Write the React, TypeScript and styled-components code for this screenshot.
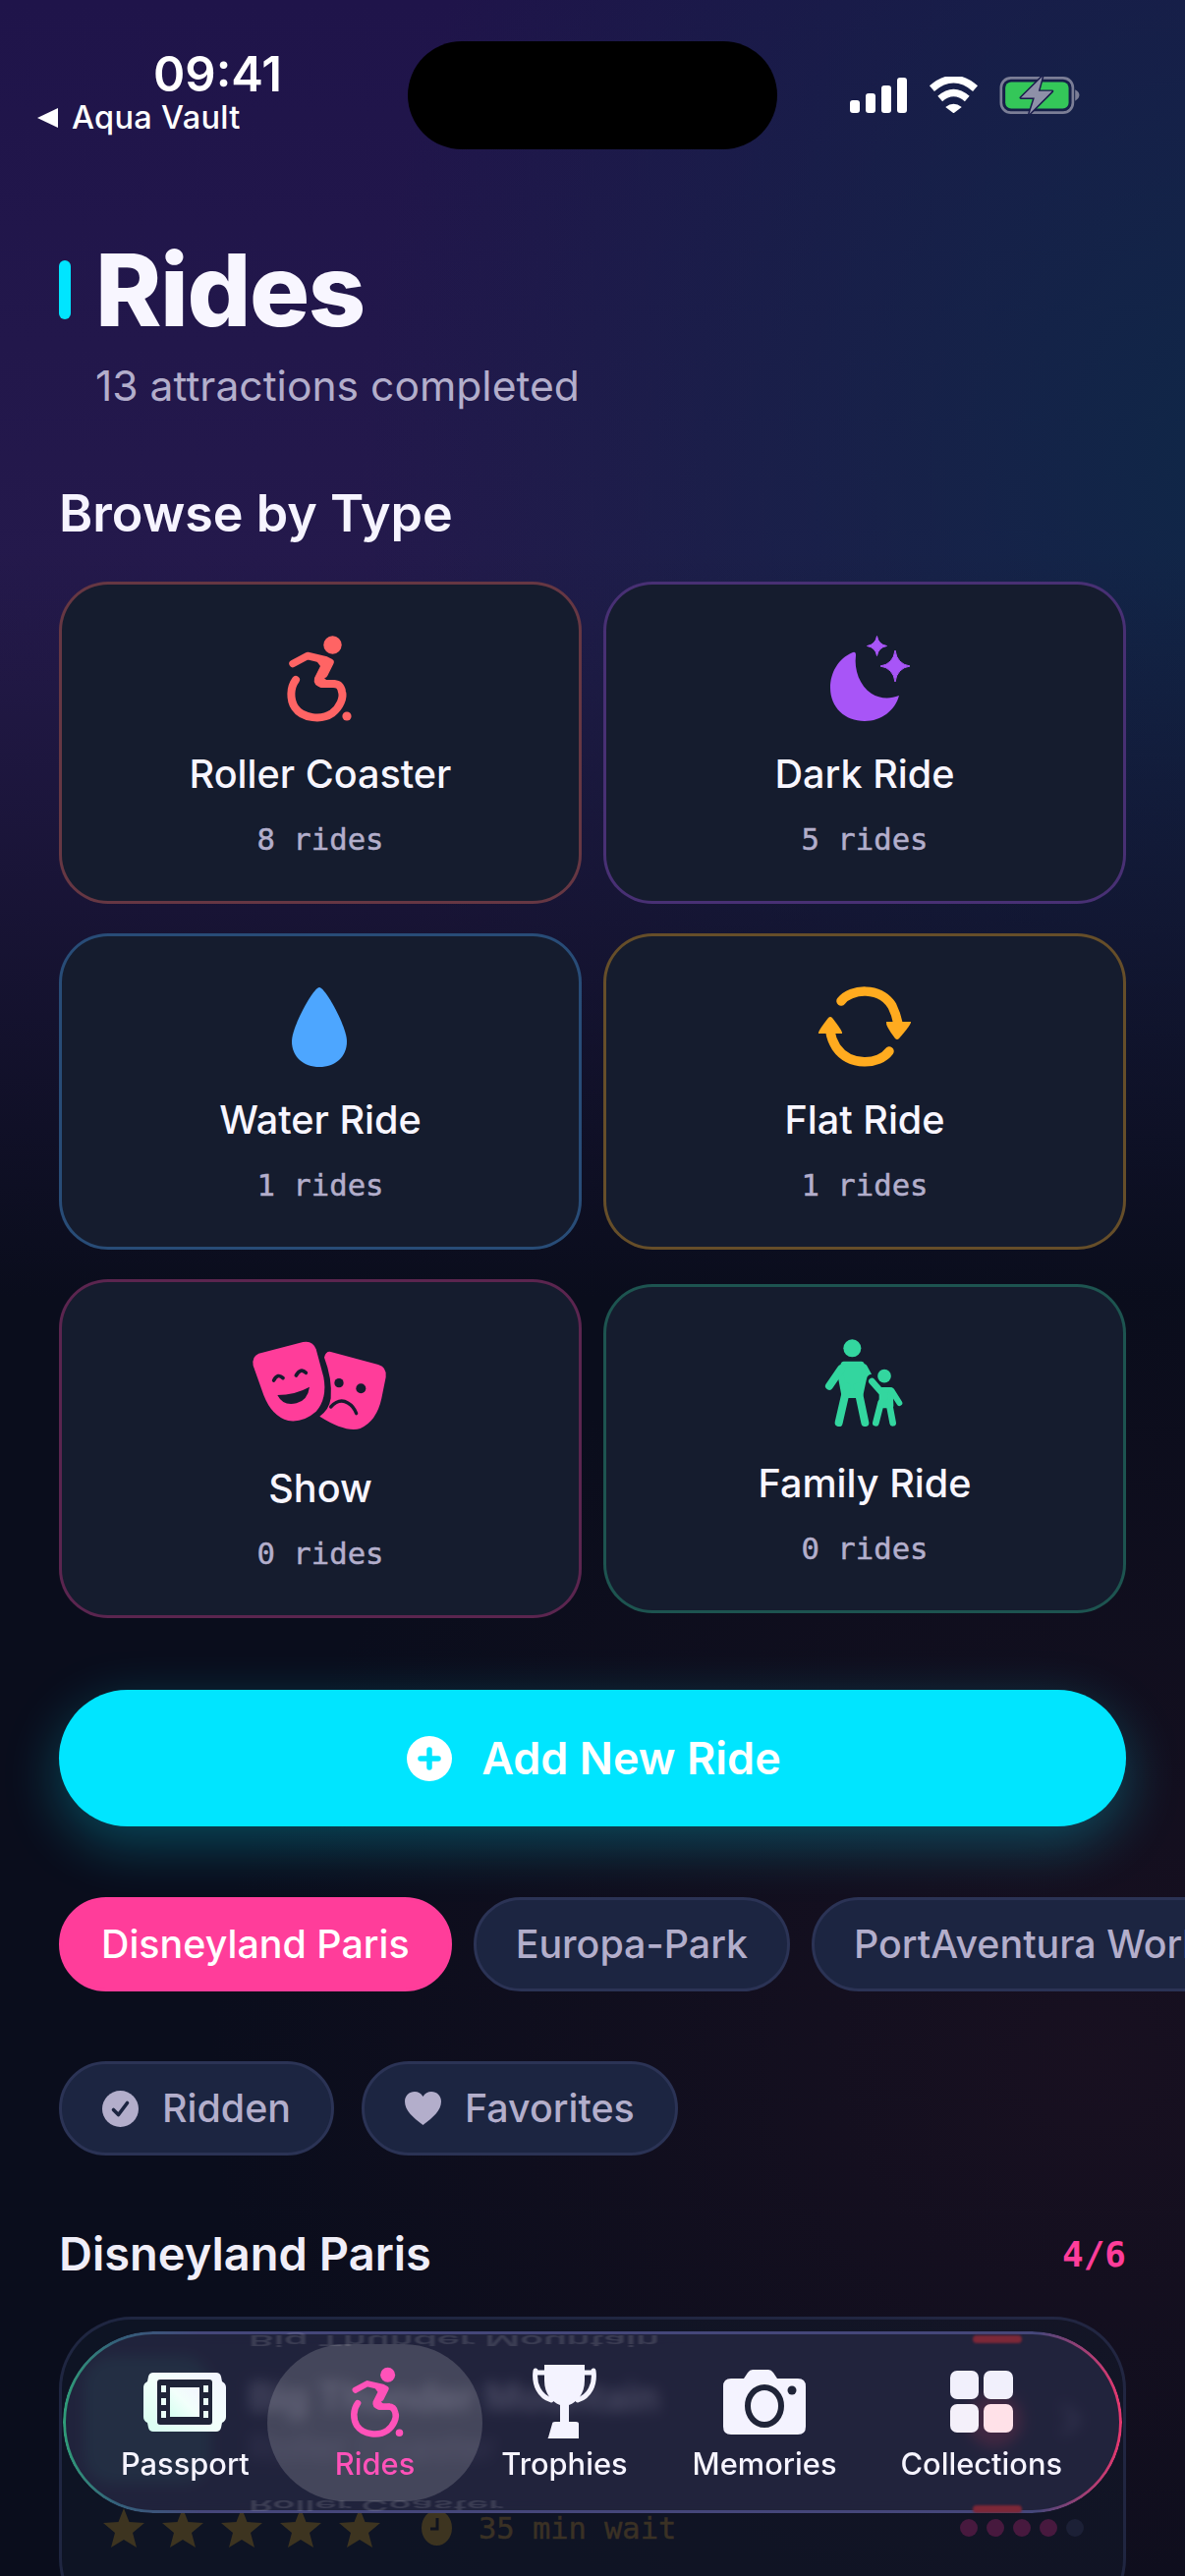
import React from "react";
import styled, { createGlobalStyle } from "styled-components";

const GlobalStyle = createGlobalStyle`
  html, body {
    margin: 0;
    padding: 0;
    width: 1206px;
    height: 2622px;
    overflow: hidden;
    background: #0a0d1c;
  }
`;

const Page = styled.div`
  position: relative;
  width: 1206px;
  height: 2622px;
  overflow: hidden;
  font-family: Inter, "Liberation Sans", sans-serif;
  color: #f6f4ff;
  background:
    radial-gradient(ellipse 900px 800px at 92% 2100px, rgba(62, 24, 44, 0.27), rgba(62, 24, 44, 0) 100%),
    linear-gradient(180deg, rgba(10, 13, 28, 0) 0, rgba(10, 13, 28, 0) 560px, rgba(10, 13, 28, 1) 1320px),
    radial-gradient(ellipse 900px 1100px at 105% 480px, #0f2747 0%, rgba(15, 39, 71, 0) 100%),
    linear-gradient(180deg, #1f144a 0, #251a4c 700px);
`;

const StatusBar = styled.header`
  display: grid;
  grid-template-columns: 415px 376px 1fr;
  height: 110px;
  padding-top: 42px;
`;

const StatusLeft = styled.div`
  display: flex;
  flex-direction: column;
`;

const Clock = styled.div`
  margin: 8px 0 0 156px;
  font-size: 49px;
  line-height: 52px;
  font-weight: 600;
  color: #fff;
`;

const BackLink = styled.div`
  display: flex;
  align-items: center;
  gap: 14px;
  margin: -1px 0 0 38px;
  font-size: 32.5px;
  line-height: 38px;
  font-weight: 500;
  color: #fff;
  letter-spacing: 0.3px;
`;

const Island = styled.div`
  width: 376px;
  height: 110px;
  border-radius: 55px;
  background: #000;
`;

const StatusIcons = styled.div`
  display: flex;
  align-items: flex-start;
  padding: 36px 0 0 74px;
  gap: 22px;
`;

const Main = styled.main`
  padding: 0 60px;
`;

const TitleRow = styled.div`
  display: flex;
  align-items: center;
  gap: 25px;
  margin-top: 93px;
`;

const TitleBar = styled.div`
  width: 12px;
  height: 60px;
  border-radius: 6px;
  background: #00e5ff;
`;

const Title = styled.h1`
  margin: 0;
  font-size: 102px;
  line-height: 100px;
  font-weight: 800;
  letter-spacing: -1.5px;
  color: #f8f6ff;
`;

const Subtitle = styled.p`
  margin: 23px 0 0 37px;
  font-size: 42.6px;
  line-height: 50px;
  color: #b3aecb;
`;

const SectionHeading = styled.h2`
  margin: 75px 0 0;
  font-size: 52px;
  line-height: 60px;
  font-weight: 600;
  color: #f6f4ff;
`;

const TypeGrid = styled.div`
  display: grid;
  grid-template-columns: 532px 532px;
  column-gap: 22px;
  row-gap: 30px;
  align-items: center;
  margin-top: 39px;
`;

const TypeCard = styled.div<{ $accent: string }>`
  display: flex;
  flex-direction: column;
  align-items: center;
  box-sizing: border-box;
  padding: 50px 0 47px;
  border: 3px solid ${(p) => p.$accent};
  border-radius: 50px;
  background: #151c2e;
`;

const TypeIcon = styled.div<{ $h: number }>`
  display: flex;
  justify-content: center;
  height: ${(p) => p.$h}px;
  margin-top: -3px;
  svg {
    display: block;
    overflow: visible;
  }
`;

const TypeName = styled.div`
  margin-top: 32px;
  font-size: 39.6px;
  line-height: 44px;
  font-weight: 500;
  color: #f8f6ff;
`;

const TypeCount = styled.div`
  margin-top: 27px;
  margin-bottom: -3px;
  font-family: "DejaVu Sans Mono", "Liberation Mono", monospace;
  font-size: 30.6px;
  line-height: 36px;
  color: #b3aecb;
  -webkit-text-stroke: 0.5px #b3aecb;
`;

const AddButton = styled.button`
  display: flex;
  align-items: center;
  justify-content: center;
  gap: 30px;
  width: 100%;
  height: 139px;
  margin-top: 73px;
  padding: 0 0 0 3px;
  border: 0;
  border-radius: 70px;
  background: #00e5ff;
  box-shadow: 0 18px 56px rgba(0, 229, 255, 0.28);
  color: #fff;
  font-family: inherit;
  font-size: 45px;
  font-weight: 600;
`;

const ChipRow = styled.div<{ $gap: number; $top: number }>`
  display: flex;
  gap: ${(p) => p.$gap}px;
  margin-top: ${(p) => p.$top}px;
  margin-right: -60px;
`;

const Chip = styled.div<{ $active?: boolean; $withIcon?: boolean }>`
  display: flex;
  flex-shrink: 0;
  align-items: center;
  gap: 24px;
  box-sizing: border-box;
  height: 96px;
  padding: 0 ${(p) => (p.$withIcon ? 41 : 40)}px;
  border: 3px solid ${(p) => (p.$active ? "#ff3d9a" : "#2b3355")};
  border-radius: 48px;
  background: ${(p) => (p.$active ? "#ff3d9a" : "#1c2541")};
  color: ${(p) => (p.$active ? "#fff" : "#b3aecb")};
  font-size: 39.4px;
  font-weight: 500;
  white-space: nowrap;
`;

const ParkHeader = styled.div`
  display: flex;
  align-items: center;
  justify-content: space-between;
  height: 60px;
  margin-top: 70px;
`;

const ParkName = styled.h2`
  margin: 0;
  font-size: 47px;
  line-height: 60px;
  font-weight: 600;
  color: #f0eef8;
`;

const ParkProgress = styled.div`
  font-family: "DejaVu Sans Mono", "Liberation Mono", monospace;
  font-size: 36px;
  font-weight: 700;
  color: #ff3d9a;
`;

const RideCard = styled.article`
  box-sizing: border-box;
  height: 320px;
  margin-top: 34px;
  padding: 37px 40px 0 42px;
  border: 3px solid rgba(58, 68, 110, 0.4);
  border-radius: 74px;
  background: rgba(21, 28, 46, 0.45);
`;

const RideTop = styled.div`
  display: flex;
  align-items: center;
  height: 130px;
`;

const RideThumb = styled.div`
  width: 130px;
  height: 130px;
  margin-left: -20px;
  border-radius: 30px;
  background: rgba(52, 211, 153, 0.3);
`;

const RideInfo = styled.div`
  flex: 1;
  margin-left: 38px;
`;

const RideName = styled.div`
  font-size: 39px;
  line-height: 56px;
  font-weight: 600;
  color: #e8e6f4;
`;

const RideType = styled.div`
  font-size: 38px;
  line-height: 46px;
  color: #6f6b85;
`;

const RideBadge = styled.div`
  width: 56px;
  height: 56px;
  border-radius: 50%;
  background: rgba(255, 59, 82, 0.65);
`;

const RideChevron = styled.div`
  margin: 0 3px 0 40px;
  color: #8a8aa6;
  svg {
    display: block;
  }
`;

const RideMeta = styled.div`
  display: flex;
  align-items: center;
  height: 42px;
  margin-top: 24px;
`;

const Stars = styled.div`
  display: flex;
  gap: 18px;
  svg {
    display: block;
  }
`;

const WaitText = styled.span`
  flex: 1;
  margin-left: 27px;
  font-family: "DejaVu Sans Mono", "Liberation Mono", monospace;
  font-size: 30.4px;
  color: #3a3124;
  -webkit-text-stroke: 0.5px #3a3124;
`;

const Dots = styled.div`
  display: flex;
  gap: 9px;
`;

const Dot = styled.span<{ $on: boolean }>`
  width: 18px;
  height: 18px;
  border-radius: 50%;
  background: ${(p) => (p.$on ? "#47193e" : "#1c2036")};
`;

const Nav = styled.nav`
  position: absolute;
  left: 64px;
  top: 2373px;
  display: flex;
  align-items: center;
  box-sizing: border-box;
  width: 1078px;
  height: 185px;
  padding-left: 41px;
  border-radius: 92px;
  overflow: hidden;
  background: rgba(38, 39, 66, 0.8);
  backdrop-filter: blur(7px);
  &::before {
    content: "";
    position: absolute;
    inset: 0;
    padding: 3px;
    border-radius: 92px;
    background: linear-gradient(90deg, #2f9e78 0, #34607a 5%, #45477a 13%, #45477a 92%, #e8386f 100%);
    -webkit-mask: linear-gradient(#000 0 0) content-box, linear-gradient(#000 0 0);
    -webkit-mask-composite: xor;
    mask-composite: exclude;
  }
`;

const Mirror = styled.div<{ $left: number; $top: number; $size: number }>`
  position: absolute;
  left: ${(p) => p.$left}px;
  top: ${(p) => p.$top}px;
  font-size: ${(p) => p.$size}px;
  line-height: 30px;
  font-weight: 600;
  white-space: nowrap;
  color: rgba(255, 255, 255, 0.12);
  transform: scaleY(-0.38);
  filter: blur(0.8px);
`;

const RedGlint = styled.div<{ $top: number }>`
  position: absolute;
  left: 926px;
  top: ${(p) => p.$top}px;
  width: 50px;
  height: 8px;
  border-radius: 4px;
  background: #7c2838;
  filter: blur(1px);
`;

const NavItem = styled.div<{ $active?: boolean; $pad: number }>`
  position: relative;
  display: flex;
  flex-direction: column;
  align-items: center;
  box-sizing: border-box;
  height: 160px;
  padding: 19px ${(p) => p.$pad}px 0;
  border-radius: 80px;
  background: ${(p) => (p.$active ? "rgba(255, 255, 255, 0.16)" : "transparent")};
  color: ${(p) => (p.$active ? "#ff52b9" : "#f6f4ff")};
`;

const NavGlyph = styled.div`
  display: flex;
  align-items: center;
  justify-content: center;
  height: 80px;
  svg {
    display: block;
    overflow: visible;
  }
`;

const NavLabel = styled.div`
  margin-top: 3px;
  font-size: 30.8px;
  line-height: 40px;
  font-weight: 500;
  white-space: nowrap;
`;

// status bar icons, coords taken from a 3x crop so they stay in crop units
const SignalIcon = () => (
  <svg width="58" height="36" viewBox="0 0 58 36" fill="#fff" style={{ display: "block", marginTop: 1 }}>
    <rect x="0" y="23" width="10" height="13" rx="3" />
    <rect x="16" y="16" width="10" height="20" rx="3" />
    <rect x="32" y="8" width="10" height="28" rx="3" />
    <rect x="48" y="0" width="10" height="36" rx="3" />
  </svg>
);

const WifiIcon = () => (
  <svg width="51" height="37" viewBox="318 88 148 107" style={{ display: "block" }}>
    <path d="M328 123 Q392 68 456 123" fill="none" stroke="#fff" strokeWidth="22" strokeLinecap="butt" />
    <path d="M352 153 Q392 118 432 153" fill="none" stroke="#fff" strokeWidth="21" />
    <path d="M368 178 Q392 158 416 178 L392 196 Z" fill="#fff" />
  </svg>
);

const BatteryIcon = () => (
  <svg width="82" height="38" viewBox="535 85 245 115" style={{ display: "block", marginLeft: -1 }}>
    <rect x="539" y="89" width="221" height="107" rx="30" fill="none" stroke="#7b7e96" strokeWidth="8" />
    <rect x="552" y="102" width="195" height="81" rx="18" fill="#34c759" />
    <path d="M767 125 Q780 132 780 142 Q780 152 767 160 Z" fill="#7b7e96" />
    <path
      d="M666 85 L600 150 L642 150 L626 200 L696 130 L654 130 Z"
      fill="#8e90a8"
      stroke="#191b4a"
      strokeWidth="9"
      strokeLinejoin="round"
      paintOrder="stroke"
    />
  </svg>
);

const BackArrow = () => (
  <svg width="21" height="20" viewBox="0 0 21 20" style={{ display: "block" }}>
    <path d="M21 0 V20 L0 10 Z" fill="#fff" />
  </svg>
);

// same drawing for the roller coaster card and the nav tab
const WheelchairIcon = ({ w, h, viewBox }: { w: number; h: number; viewBox: string }) => (
  <svg width={w} height={h} viewBox={viewBox} fill="currentColor">
    <circle cx="98.5" cy="36.5" r="9.2" />
    <path d="M58 55.5 L73 47.5 L92 52 L96 54 L90 66" fill="none" stroke="currentColor" strokeWidth="7.5" strokeLinecap="round" strokeLinejoin="round" />
    <path d="M80 50 L97 52 Q98 57 95 62 L90 70 L94 74 L101 72 L104 80 L88 80 Q78 78 80 70 L86 58 Z" />
    <path
      d="M61 72 C55 80 55 92 60 100 C68 112 88 113 98 106 C106 100 110 90 108 84 C107 78 104 76 99 76 L88 76"
      fill="none"
      stroke="currentColor"
      strokeWidth="8"
      strokeLinecap="round"
    />
    <circle cx="113" cy="109" r="4.6" />
  </svg>
);

const MoonIcon = () => (
  <svg width="140" height="92" viewBox="810 642 140 92" fill="#a855f7">
    <path
      d="M868 664 C853 670 845 685 845 700 C845 720 860 734 880 734 C897 734 911 723 915 708 C905 712 895 711 887 706 C875 698 869 682 871 667 Q871 663 868 664 Z"
    />
    <path d="M911 662 Q913 676 926 678 Q913 680 911 694 Q909 680 896 678 Q909 676 911 662 Z" stroke="#a855f7" strokeWidth="1" />
    <path d="M892.5 647.5 Q894 656 902.5 657.5 Q894 659 892.5 667.5 Q891 659 882.5 657.5 Q891 656 892.5 647.5 Z" stroke="#a855f7" strokeWidth="1" />
  </svg>
);

const DropIcon = () => (
  <svg width="140" height="86" viewBox="256 1000 140 86" fill="#4da6ff">
    <path d="M325 1005 C331 1005 353 1045 353 1060 C353 1076 341 1086 325 1086 C309 1086 297 1076 297 1060 C297 1045 319 1005 325 1005 Z" />
  </svg>
);

const CycleIcon = () => (
  <svg width="140" height="86" viewBox="810 1000 140 86" fill="#ffab1f">
    <path d="M856 1019 C866 1006 896 1004 908 1024 Q912 1032 914 1042" fill="none" stroke="#ffab1f" strokeWidth="9.5" strokeLinecap="round" />
    <path d="M902 1040 L927 1040 Q928 1042 915 1057 Q913 1059 911 1057 Q901 1044 902 1040 Z" />
    <path d="M905 1070 C895 1084 865 1086 851 1066 Q846 1058 845 1050" fill="none" stroke="#ffab1f" strokeWidth="9.5" strokeLinecap="round" />
    <path d="M833 1052 L857 1052 Q858 1050 847 1036 Q845 1034 843 1036 Q832 1050 833 1052 Z" />
  </svg>
);

const MasksIcon = () => (
  <svg width="140" height="109" viewBox="108 36 420 327">
    <path
      fill="#ff3d9a"
      d="M130 113 L265 78 Q295 72 305 100 L328 185 Q340 250 305 290 Q265 325 220 318 Q170 305 145 240 L113 150 Q108 122 130 113 Z"
    />
    <path
      fill="#ff3d9a"
      d="M350 108 L495 147 Q522 155 518 185 L505 250 Q490 320 440 342 Q395 355 316 305 Q345 285 350 250 Q355 190 330 125 Q335 105 350 108 Z"
    />
    <g fill="none" stroke="#151c2e" strokeLinecap="round">
      <path d="M176 195 Q188 172 204 188" strokeWidth="11" />
      <path d="M244 180 Q258 155 274 172" strokeWidth="11" />
      <path d="M350 276 Q376 248 402 264 Q420 274 428 296" strokeWidth="10" />
    </g>
    <path d="M187 240 Q240 240 285 215 Q280 255 245 265 Q205 275 187 240 Z" fill="#151c2e" />
    <circle cx="375" cy="203" r="14" fill="#151c2e" />
    <circle cx="442" cy="220" r="15" fill="#151c2e" />
  </svg>
);

const FamilyIcon = () => (
  <svg width="140" height="99" viewBox="30 51 420 297">
    <g fill="#33d69f" stroke="#33d69f" strokeLinecap="round" strokeLinejoin="round">
      <circle cx="202" cy="97" r="27" stroke="none" />
      <path d="M176 146 L230 146 L240 175 L226 240 L178 240 L166 175 Z" strokeWidth="18" />
      <path d="M168 160 L132 212" fill="none" strokeWidth="24" />
      <path d="M238 155 L256 188" fill="none" strokeWidth="20" />
      <path d="M186 215 L161 324" fill="none" strokeWidth="24" />
      <path d="M218 215 L241 324" fill="none" strokeWidth="24" />
    </g>
    <path d="M262 192 L292 232" fill="none" stroke="#151c2e" strokeWidth="32" strokeLinecap="round" />
    <g fill="#33d69f" stroke="#33d69f" strokeLinecap="round" strokeLinejoin="round">
      <circle cx="300" cy="182" r="20.5" stroke="none" />
      <path d="M262 198 L290 230" fill="none" strokeWidth="20" />
      <path d="M292 224 L318 224 L320 272 L292 272 Z" strokeWidth="16" />
      <path d="M322 226 L346 264" fill="none" strokeWidth="18" />
      <path d="M290 262 L274 325" fill="none" strokeWidth="20" />
      <path d="M314 262 L326 325" fill="none" strokeWidth="20" />
    </g>
  </svg>
);

const PlusCircle = () => (
  <svg width="46" height="46" viewBox="0 0 46 46" style={{ display: "block" }}>
    <circle cx="23" cy="23" r="23" fill="#fff" />
    <path d="M23 14 V32 M14 23 H32" stroke="#00e5ff" strokeWidth="5.5" strokeLinecap="round" />
  </svg>
);

const CheckCircle = () => (
  <svg width="37" height="37" viewBox="0 0 37 37" style={{ display: "block" }}>
    <circle cx="18.5" cy="18.5" r="18.5" fill="#b3aecb" />
    <path d="M11.5 19.5 L16.5 24.5 L25.5 12.5" fill="none" stroke="#1c2541" strokeWidth="3.6" strokeLinecap="round" strokeLinejoin="round" />
  </svg>
);

const HeartIcon = () => (
  <svg width="37" height="34" viewBox="0 0 37 34" style={{ display: "block" }}>
    <path d="M18.5 34 C8 26 0 19 0 10 C0 4 4.5 0 10 0 C13.5 0 16.5 1.8 18.5 5 C20.5 1.8 23.5 0 27 0 C32.5 0 37 4 37 10 C37 19 29 26 18.5 34 Z" fill="#b3aecb" />
  </svg>
);

const StarIcon = () => (
  <svg width="42" height="40" viewBox="0 0 42 40">
    <path d="M21 0 L26.5 14 L42 15 L30 25 L34 40 L21 32 L8 40 L12 25 L0 15 L15.5 14 Z" fill="#3d3420" />
  </svg>
);

const ClockIcon = () => (
  <svg width="31" height="36" viewBox="0 0 31 36" style={{ display: "block", marginLeft: 42 }}>
    <ellipse cx="15.5" cy="18" rx="15.5" ry="18" fill="#3d3420" />
    <path d="M16 8 V19 H9" fill="none" stroke="#10131f" strokeWidth="3" />
  </svg>
);

const ChevronIcon = () => (
  <svg width="20" height="32" viewBox="0 0 20 32" fill="none">
    <path d="M3 3 L17 16 L3 29" stroke="currentColor" strokeWidth="4" strokeLinecap="round" strokeLinejoin="round" />
  </svg>
);

const PassportIcon = () => (
  <svg width="84" height="60" viewBox="0 0 84 60">
    <defs>
      <linearGradient id="passFill" x1="0" y1="1" x2="1" y2="0">
        <stop offset="0" stopColor="#d6fff0" />
        <stop offset="0.5" stopColor="#f2fffb" />
        <stop offset="1" stopColor="#f3f4ff" />
      </linearGradient>
    </defs>
    <path
      d="M10 0 H74 Q78 0 79 4 L80 9 Q84 11 84 15 V45 Q84 49 80 51 L79 56 Q78 60 74 60 H10 Q6 60 5 56 L4 51 Q0 49 0 45 V15 Q0 11 4 9 L5 4 Q6 0 10 0 Z"
      fill="url(#passFill)"
    />
    <rect x="14" y="7" width="56" height="46" rx="3" fill="#1f2438" />
    <rect x="27" y="15" width="30" height="30" fill="url(#passFill)" />
    <g fill="#eafff8">
      <rect x="18" y="13" width="5" height="7" />
      <rect x="18" y="26" width="5" height="7" />
      <rect x="18" y="39" width="5" height="7" />
      <rect x="61" y="13" width="5" height="7" />
      <rect x="61" y="26" width="5" height="7" />
      <rect x="61" y="39" width="5" height="7" />
    </g>
  </svg>
);

const TrophyIcon = () => (
  <svg width="67" height="75" viewBox="0 0 67 75">
    <path d="M4 8 H16 M63 8 H51" stroke="#f4f3ff" strokeWidth="5" />
    <path
      d="M4 6 C2 20 8 32 20 36 M63 6 C65 20 59 32 47 36"
      fill="none"
      stroke="#f4f3ff"
      strokeWidth="5"
      strokeLinecap="round"
    />
    <path d="M13 0 H54 L54 16 C54 30 46 38 38 41 V58 H29 V41 C21 38 13 30 13 16 Z" fill="#f4f3ff" />
    <path d="M20 60 Q20 58 23 58 H44 Q47 58 47 60 V75 H16 Q15 75 16 74 Z" fill="#f4f3ff" transform="translate(1 0)" />
  </svg>
);

const CameraIcon = () => (
  <svg width="84" height="66" viewBox="0 0 84 66">
    <path
      d="M8 9 H21 L25 3 Q27 0 30 0 H46 Q49 0 51 3 L55 9 H76 Q84 9 84 17 V58 Q84 66 76 66 H8 Q0 66 0 58 V17 Q0 9 8 9 Z"
      fill="#f4f3ff"
    />
    <ellipse cx="42" cy="37" rx="17" ry="19" fill="none" stroke="#1f2438" strokeWidth="6" />
    <circle cx="70" cy="21" r="4.5" fill="#1f2438" />
  </svg>
);

const CollectionsIcon = () => (
  <svg width="64" height="63" viewBox="0 0 64 63">
    <rect x="0" y="0" width="29" height="29" rx="7" fill="#f1f0fc" />
    <rect x="34" y="0" width="30" height="29" rx="7" fill="#f1f0fc" />
    <rect x="0" y="34" width="29" height="29" rx="7" fill="#f4f0fa" />
    <rect x="34" y="34" width="30" height="29" rx="7" fill="#ffe1e8" />
  </svg>
);

const types = [
  { name: "Roller Coaster", count: 8, accent: "rgba(255, 107, 107, 0.35)", h: 92, icon: <span style={{ color: "#ff6464" }}><WheelchairIcon w={140} h={92} viewBox="16 22 140 92" /></span> },
  { name: "Dark Ride", count: 5, accent: "rgba(168, 85, 247, 0.35)", h: 92, icon: <MoonIcon /> },
  { name: "Water Ride", count: 1, accent: "rgba(77, 166, 255, 0.35)", h: 86, icon: <DropIcon /> },
  { name: "Flat Ride", count: 1, accent: "rgba(255, 171, 31, 0.35)", h: 86, icon: <CycleIcon /> },
  { name: "Show", count: 0, accent: "rgba(255, 61, 154, 0.3)", h: 109, icon: <MasksIcon /> },
  { name: "Family Ride", count: 0, accent: "rgba(51, 214, 159, 0.3)", h: 99, icon: <FamilyIcon /> },
];

const tabs = [
  { label: "Passport", pad: 18, icon: <PassportIcon /> },
  { label: "Rides", pad: 69, active: true, icon: <WheelchairIcon w={66} h={75} viewBox="50 24 66 92" /> },
  { label: "Trophies", pad: 19, icon: <TrophyIcon /> },
  { label: "Memories", pad: 47, icon: <CameraIcon /> },
  { label: "Collections", pad: 18, icon: <CollectionsIcon /> },
];

export default function App() {
  return (
    <Page>
      <GlobalStyle />
      <StatusBar>
        <StatusLeft>
          <Clock>09:41</Clock>
          <BackLink>
            <BackArrow />
            Aqua Vault
          </BackLink>
        </StatusLeft>
        <Island />
        <StatusIcons>
          <SignalIcon />
          <WifiIcon />
          <BatteryIcon />
        </StatusIcons>
      </StatusBar>

      <Main>
        <TitleRow>
          <TitleBar />
          <Title>Rides</Title>
        </TitleRow>
        <Subtitle>13 attractions completed</Subtitle>

        <SectionHeading>Browse by Type</SectionHeading>
        <TypeGrid>
          {types.map((t) => (
            <TypeCard key={t.name} $accent={t.accent}>
              <TypeIcon $h={t.h}>{t.icon}</TypeIcon>
              <TypeName>{t.name}</TypeName>
              <TypeCount>{t.count} rides</TypeCount>
            </TypeCard>
          ))}
        </TypeGrid>

        <AddButton>
          <PlusCircle />
          Add New Ride
        </AddButton>

        <ChipRow $gap={22} $top={72}>
          <Chip $active>Disneyland Paris</Chip>
          <Chip>Europa-Park</Chip>
          <Chip>PortAventura World</Chip>
        </ChipRow>

        <ChipRow $gap={28} $top={71}>
          <Chip $withIcon>
            <CheckCircle />
            Ridden
          </Chip>
          <Chip $withIcon>
            <HeartIcon />
            Favorites
          </Chip>
        </ChipRow>

        <ParkHeader>
          <ParkName>Disneyland Paris</ParkName>
          <ParkProgress>4/6</ParkProgress>
        </ParkHeader>

        <RideCard>
          <RideTop>
            <RideThumb />
            <RideInfo>
              <RideName>Big Thunder Mountain</RideName>
              <RideType>Roller Coaster</RideType>
            </RideInfo>
            <RideBadge />
            <RideChevron>
              <ChevronIcon />
            </RideChevron>
          </RideTop>
          <RideMeta>
            <Stars>
              {[0, 1, 2, 3, 4].map((i) => (
                <StarIcon key={i} />
              ))}
            </Stars>
            <ClockIcon />
            <WaitText>35 min wait</WaitText>
            <Dots>
              {[true, true, true, true, false].map((on, i) => (
                <Dot key={i} $on={on} />
              ))}
            </Dots>
          </RideMeta>
        </RideCard>
      </Main>

      <Nav>
        <Mirror $left={189} $top={-6} $size={39}>Big Thunder Mountain</Mirror>
        <Mirror $left={189} $top={162} $size={38}>Roller Coaster</Mirror>
        <RedGlint $top={4} />
        <RedGlint $top={177} />
        {tabs.map((t) => (
          <NavItem key={t.label} $active={t.active} $pad={t.pad}>
            <NavGlyph>{t.icon}</NavGlyph>
            <NavLabel>{t.label}</NavLabel>
          </NavItem>
        ))}
      </Nav>
    </Page>
  );
}
